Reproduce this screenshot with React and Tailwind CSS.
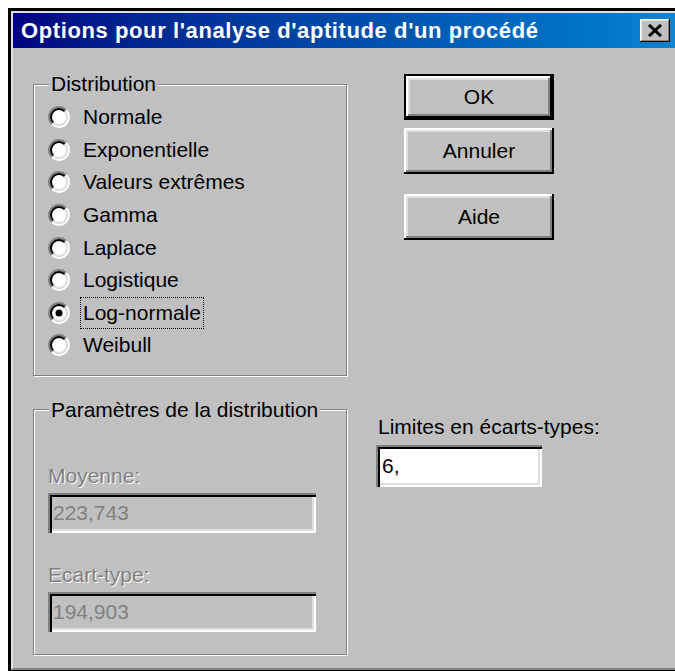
import React from "react";

const SUNKEN =
  "shadow-[inset_2px_2px_0_#808080,inset_4px_4px_0_#000,inset_-2px_-2px_0_#fff,inset_-4px_-4px_0_#dfdfdf]";

function Radio({ checked }) {
  return (
    <svg width="22" height="22" viewBox="0 0 22 22" className="shrink-0">
      <circle cx="11" cy="11" r="8" fill="#fff" />
      <path d="M3.93 18.07 A10 10 0 0 1 18.07 3.93" stroke="#808080" strokeWidth="2" fill="none" />
      <path d="M18.07 3.93 A10 10 0 0 1 3.93 18.07" stroke="#fff" strokeWidth="2" fill="none" />
      <path d="M5.34 16.66 A8 8 0 0 1 16.66 5.34" stroke="#000" strokeWidth="2" fill="none" />
      <path d="M16.66 5.34 A8 8 0 0 1 5.34 16.66" stroke="#dfdfdf" strokeWidth="2" fill="none" />
      {checked && <circle cx="11" cy="11" r="3.5" fill="#000" />}
    </svg>
  );
}

function Button({ children, isDefault }) {
  return (
    <button
      type="button"
      className={
        isDefault
          ? "flex h-[46px] w-[150px] items-center justify-center border-2 border-black bg-[#c0c0c0] text-[21px] leading-[24px] text-black shadow-[inset_-2px_-2px_0_#000,inset_2px_2px_0_#fff,inset_-4px_-4px_0_#808080,inset_4px_4px_0_#dfdfdf]"
          : "flex h-[46px] w-[150px] items-center justify-center bg-[#c0c0c0] text-[21px] leading-[24px] text-black shadow-[inset_-2px_-2px_0_#000,inset_2px_2px_0_#fff,inset_-4px_-4px_0_#808080,inset_4px_4px_0_#dfdfdf]"
      }
    >
      {children}
    </button>
  );
}

const distributions = [
  "Normale",
  "Exponentielle",
  "Valeurs extrêmes",
  "Gamma",
  "Laplace",
  "Logistique",
  "Log-normale",
  "Weibull",
];

export default function App() {
  const selected = "Log-normale";
  return (
    <div className="h-[671px] w-[675px] overflow-hidden bg-white pl-[8px] pt-[8px] font-['Liberation_Sans',Arial,sans-serif] text-black">
      <div className="flex h-[663px] flex-col border-b border-l-[3px] border-t-[3px] border-black">
        <div className="flex flex-1 flex-col border-b-2 border-l-2 border-t-2 border-[#dfdfdf] border-b-[#808080] bg-[#c0c0c0]">
          {/* title bar */}
          <div className="flex h-[35px] items-center justify-between bg-gradient-to-r from-[#000080] to-[#1084d0] pl-[8px] pr-[5px]">
            <span className="text-[22px] font-bold leading-[24px] tracking-[0.6px] text-white">
              Options pour l'analyse d'aptitude d'un procédé
            </span>
            <div className="flex h-[23px] w-[30px] items-center justify-center bg-[#c0c0c0] shadow-[inset_-1px_-1px_0_#000,inset_1px_1px_0_#fff,inset_-2px_-2px_0_#808080,inset_2px_2px_0_#dfdfdf]">
              <svg width="16" height="13" viewBox="0 0 16 13">
                <path d="M2 1 L14 12 M14 1 L2 12" stroke="#000" strokeWidth="3" />
              </svg>
            </div>
          </div>

          {/* body */}
          <div className="flex flex-1 pl-[20px]">
            <div className="flex w-[314px] flex-col pt-[24px]">
              <fieldset className="border border-[#808080] pb-[13px] pl-[14px] pt-[5px] shadow-[1px_1px_0_#fff,inset_1px_1px_0_#fff]">
                <legend className="ml-[1px] bg-[#c0c0c0] px-[2px] text-[21px] leading-[24px]">
                  Distribution
                </legend>
                {distributions.map((d) => (
                  <div key={d} className="flex h-[32.6px] items-center gap-[13px]">
                    <Radio checked={d === selected} />
                    {d === selected ? (
                      <span className="-ml-[3px] flex h-[32px] items-center border border-dotted border-black px-[2px] text-[21px] leading-[24px]">
                        {d}
                      </span>
                    ) : (
                      <span className="text-[21px] leading-[24px]">{d}</span>
                    )}
                  </div>
                ))}
              </fieldset>

              <fieldset className="mt-[22px] border border-[#808080] pb-[22px] pl-[14px] pt-[42px] shadow-[1px_1px_0_#fff,inset_1px_1px_0_#fff]">
                <legend className="ml-[1px] bg-[#c0c0c0] px-[2px] text-[21px] leading-[24px]">
                  Paramètres de la distribution
                </legend>
                <div className="text-[21px] leading-[24px] text-[#808080] [text-shadow:1px_1px_0_#fff]">
                  Moyenne:
                </div>
                <div className={`mt-[5px] flex h-[40px] w-[268px] items-center pl-[5px] text-[21px] leading-[24px] text-[#808080] ${SUNKEN}`}>
                  223,743
                </div>
                <div className="mt-[30px] text-[21px] leading-[24px] text-[#808080] [text-shadow:1px_1px_0_#fff]">
                  Ecart-type:
                </div>
                <div className={`mt-[5px] flex h-[40px] w-[268px] items-center pl-[5px] text-[21px] leading-[24px] text-[#808080] ${SUNKEN}`}>
                  194,903
                </div>
              </fieldset>
            </div>

            <div className="ml-[29px] flex flex-col pt-[26px]">
              <div className="ml-[28px] flex flex-col">
                <Button isDefault>OK</Button>
                <div className="mt-[8px]">
                  <Button>Annuler</Button>
                </div>
                <div className="mt-[20px]">
                  <Button>Aide</Button>
                </div>
              </div>
              <div className="mt-[175px] pl-[2px] text-[21px] leading-[24px]">
                Limites en écarts-types:
              </div>
              <div className={`mt-[6px] flex h-[42px] w-[166px] items-center bg-white pl-[6px] text-[21px] leading-[24px] ${SUNKEN}`}>
                6,
              </div>
            </div>
          </div>
        </div>
      </div>
    </div>
  );
}
